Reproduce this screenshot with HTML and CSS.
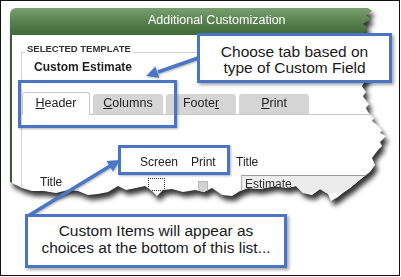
FILE: index.html
```html
<!DOCTYPE html>
<html lang="en">
<head>
  <meta charset="UTF-8">
  <meta name="viewport" content="width=device-width, initial-scale=1.0">
  <title>Additional Customization</title>
  <link rel="stylesheet" href="styles.css">
</head>
<body>
  <div class="frame">
    <div class="shot">
      <div class="window">
        <div class="titlebar">Additional Customization</div>
        <div class="win-body">
          <div class="group">
            <div class="group-label">SELECTED TEMPLATE</div>
            <div class="template-name">Custom Estimate</div>
            <div class="tabs">
              <div class="tab active"><u>H</u>eader</div>
              <div class="tab"><u>C</u>olumns</div>
              <div class="tab">Foote<u>r</u></div>
              <div class="tab"><u>P</u>rint</div>
            </div>
            <div class="panel">
              <div class="fields">
                <span></span>
                <span>Screen</span>
                <span>Print</span>
                <span>Title</span>
                <span class="row-label">Title</span>
                <span class="focus-box"></span>
                <span class="check"></span>
                <span class="text-field">Estimate</span>
              </div>
            </div>
          </div>
        </div>
      </div>
    </div>

    <svg class="arrows" viewBox="1 1 400 276" width="400" height="276">
      <line x1="201" y1="57" x2="158" y2="72"/>
      <polygon points="146,76 159.3,77.8 155.3,66.4"/>
      <line x1="28" y1="216" x2="110" y2="166"/>
      <polygon points="120,160 112.8,171.4 106.6,161.1"/>
    </svg>

    <div class="outline outline-tabs"></div>
    <div class="outline outline-cols"></div>

    <div class="callout callout-tabs">Choose tab based on<br>type of Custom Field</div>
    <div class="callout callout-items">Custom Items will appear as<br>choices at the bottom of this list...</div>
  </div>
</body>
</html>
```

FILE: styles.css
```css
body {
  margin: 0;
  background: #fff;
  font-family: "Liberation Sans", Arial, sans-serif;
}
.frame {
  position: relative;
  width: 400px;
  height: 276px;
  box-sizing: border-box;
  border: 1px solid #111;
  overflow: hidden;
}
.shot {
  padding: 7px 0 0 9px;
  filter: drop-shadow(3px 5px 2.5px rgba(0,0,0,0.8));
}
.window {
  width: 380px;
  height: 197px;
  display: flex;
  flex-direction: column;
  clip-path: polygon(0 0, 358px 0, 362px 3px, 356px 7px, 361px 11px, 353px 16px, 358px 20px, 354px 25px, 360px 30px, 356px 37px, 361px 44px, 357px 52px, 362px 62px, 356px 72px, 352px 78px, 356px 84px, 353px 88px, 354px 90px, 359px 96px, 356px 100px, 358px 104px, 364px 110px, 362px 113px, 366px 116px, 372px 122px, 370px 125px, 376px 128px, 370px 134px, 372px 138px, 368px 142px, 362px 150px, 365px 157px, 360px 164px, 352px 170px, 346px 175px, 340px 180px, 334px 184px, 328px 189px, 321px 193px, 318px 186px, 310px 181px, 302px 187px, 293px 185px, 286px 178px, 277px 180px, 265px 178px, 250px 181px, 238px 180px, 230px 183px, 222px 188px, 212px 187px, 202px 180px, 194px 184px, 185px 182px, 173px 184px, 162px 181px, 153px 182px, 147px 188px, 142px 183px, 135px 178px, 126px 180px, 116px 182px, 108px 178px, 98px 184px, 88px 186px, 78px 187px, 68px 183px, 58px 182px, 46px 185px, 34px 183px, 22px 183px, 12px 180px, 4px 176px, 0 174px);
}
.titlebar {
  height: 27px;
  flex: none;
  background: linear-gradient(#7a9f70, #557f4c 55%, #41693a);
  border-radius: 6px 0 0 0;
  color: #fff;
  font-size: 12.5px;
  line-height: 25px;
  padding-left: 138px;
}
.win-body {
  flex: 1;
  background: #fff;
  border-left: 2px solid #45563f;
  padding-left: 9px;
  display: flex;
  flex-direction: column;
}
.group {
  flex: 1;
  margin-top: 17px;
  border-top: 1px solid #d0d0d0;
  border-left: 1px solid #d0d0d0;
}
.group-label {
  width: max-content;
  margin: -10px 0 0 3px;
  padding: 0 2px;
  background: #fff;
  color: #333;
  font-size: 9.5px;
  font-weight: bold;
  line-height: 11px;
}
.template-name {
  margin: 6px 0 0 12px;
  color: #1e1e1e;
  font-size: 12px;
  font-weight: bold;
  line-height: 14px;
}
.tabs {
  display: flex;
  align-items: flex-end;
  margin-top: 18px;
  border-bottom: 1px solid #c9c9c9;
}
.tab {
  box-sizing: border-box;
  width: 70px;
  height: 20px;
  margin-left: 3px;
  background: #d5d5d5;
  border-radius: 3px 3px 0 0;
  color: #222;
  font-size: 12.5px;
  line-height: 19px;
  text-align: center;
}
.tab.active {
  width: 68px;
  height: 23px;
  margin: 0 0 -1px 0;
  background: #fff;
  border: 1px solid #c9c9c9;
  border-bottom: none;
  line-height: 21px;
}
.panel {
  padding-top: 40px;
}
.fields {
  display: grid;
  grid-template-columns: 118px 51px 45px 1fr;
  row-gap: 6px;
  color: #222;
  font-size: 12px;
  line-height: 14px;
}
.row-label {
  padding-left: 18px;
}
.focus-box {
  width: 17px;
  height: 13px;
  margin: 3px 0 0 8px;
  box-sizing: border-box;
  border: 1px dotted #333;
}
.check {
  width: 10px;
  height: 12px;
  margin: 6px 0 0 7px;
  box-sizing: border-box;
  background: #d3d3d3;
  border: 1px solid #b8b8b8;
}
.text-field {
  width: 140px;
  height: 18px;
  margin-left: 5px;
  box-sizing: border-box;
  padding-left: 3px;
  background: #ececec;
  border-top: 1px solid #9c9c9c;
  border-left: 1px solid #b0b0b0;
  color: #333;
  line-height: 17px;
}
.arrows {
  position: absolute;
  left: 0;
  top: 0;
  filter: drop-shadow(1px 1px 1px rgba(0,0,0,0.3));
}
.arrows line {
  stroke: #4a76c6;
  stroke-width: 3.5;
}
.arrows polygon {
  fill: #4a76c6;
}
.outline {
  position: absolute;
  box-sizing: border-box;
  border: 3px solid #4a74c4;
  box-shadow: 1px 1px 2px rgba(0,0,0,0.3);
}
.outline-tabs {
  left: 17px;
  top: 79px;
  width: 159px;
  height: 48px;
}
.outline-cols {
  left: 117px;
  top: 144px;
  width: 112px;
  height: 30px;
}
.callout {
  position: absolute;
  box-sizing: border-box;
  background: #fff;
  border: 3px solid #4a74c4;
  box-shadow: 2px 2px 3px rgba(0,0,0,0.35);
  color: #1a1a1a;
  font-size: 15.5px;
  text-align: center;
}
.callout-tabs {
  left: 196px;
  top: 32px;
  width: 195px;
  height: 50px;
  padding-top: 8px;
  line-height: 16px;
}
.callout-items {
  left: 24px;
  top: 213px;
  width: 262px;
  height: 54px;
  padding-top: 5px;
  line-height: 17px;
}
```
